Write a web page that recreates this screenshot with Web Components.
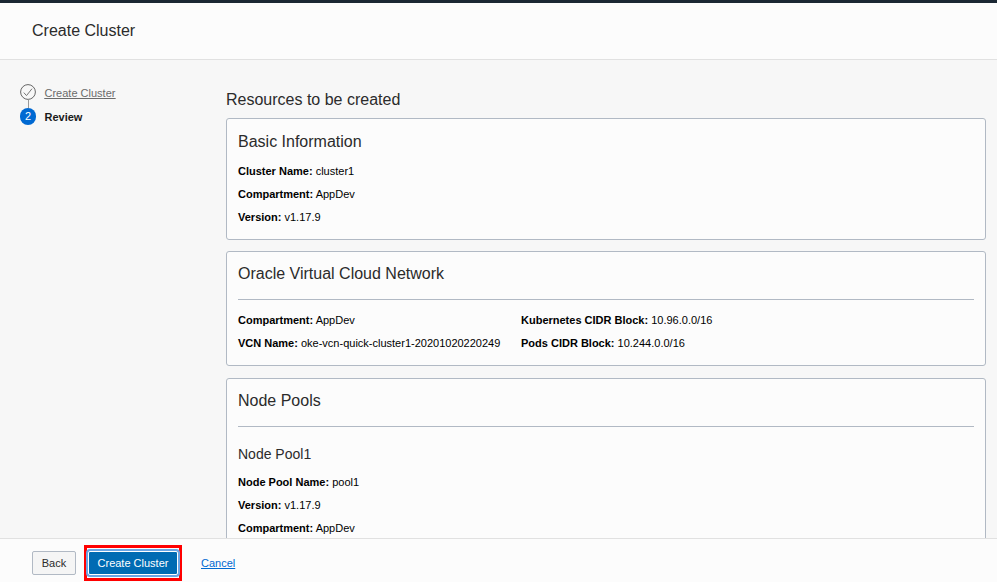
<!DOCTYPE html>
<html lang="en">
<head>
<meta charset="utf-8">
<title>Create Cluster</title>
<style>
html, body { margin: 0; height: 100%; overflow: hidden; }
body { font-family: "Liberation Sans", Arial, sans-serif; font-size: 11px; color: #000; }
</style>
</head>
<body>
<wizard-page>
  <span slot="title">Create Cluster</span>
  <step-list slot="steps">
    <step-item state="done">Create Cluster</step-item>
    <step-item state="current" number="2">Review</step-item>
  </step-list>
  <span slot="heading">Resources to be created</span>
  <info-card heading="Basic Information" style="--ls:.12px">
    <info-row label="Cluster Name:">cluster1</info-row>
    <info-row label="Compartment:">AppDev</info-row>
    <info-row label="Version:">v1.17.9</info-row>
  </info-card>
  <info-card heading="Oracle Virtual Cloud Network" ruled columns>
    <info-row label="Compartment:">AppDev</info-row>
    <info-row label="Kubernetes CIDR Block:">10.96.0.0/16</info-row>
    <info-row label="VCN Name:">oke-vcn-quick-cluster1-20201020220249</info-row>
    <info-row label="Pods CIDR Block:">10.244.0.0/16</info-row>
  </info-card>
  <info-card heading="Node Pools" ruled subheading="Node Pool1">
    <info-row label="Node Pool Name:">pool1</info-row>
    <info-row label="Version:">v1.17.9</info-row>
    <info-row label="Compartment:">AppDev</info-row>
  </info-card>
  <action-button slot="actions">Back</action-button>
  <action-button slot="actions" primary>Create Cluster</action-button>
  <action-button slot="actions" link>Cancel</action-button>
</wizard-page>
<script>
class Base extends HTMLElement {
  constructor() {
    super();
    this.attachShadow({ mode: 'open' }).innerHTML = this.render();
  }
}
customElements.define('wizard-page', class extends Base {
  render() {
    return `<style>
      :host { display: flex; flex-direction: column; height: 100vh; box-sizing: border-box; border-top: 3px solid #1b2733; background: #f7f7f7; }
      header { flex: none; height: 56px; background: #fcfcfc; border-bottom: 1px solid #e1e1e1; padding-left: 32px; font-size: 16px; line-height: 56px; color: #2b2b2b; }
      main { flex: 1; min-height: 0; overflow: hidden; display: grid; grid-template-columns: 206px 760px; padding-left: 20px; }
      nav { padding-top: 24px; }
      h1 { margin: 0; font-size: 16px; font-weight: 400; line-height: 18px; color: #2b2b2b; padding: 31px 0 9px; }
      footer { flex: none; height: 43px; box-sizing: content-box; background: #fcfcfc; border-top: 1px solid #e1e1e1; display: flex; align-items: center; padding-left: 32px; }
      .bar { display: flex; align-items: center; height: 36px; padding-top: 4px; }
    </style>
    <header><slot name="title"></slot></header>
    <main><nav><slot name="steps"></slot></nav><section><h1><slot name="heading"></slot></h1><slot></slot></section></main>
    <footer><div class="bar"><slot name="actions"></slot></div></footer>`;
  }
});
customElements.define('step-list', class extends Base {
  render() { return `<style>:host { display: block; }</style><slot></slot>`; }
});
customElements.define('step-item', class extends Base {
  render() {
    const done = this.getAttribute('state') === 'done';
    const icon = done
      ? `<svg width="16" height="24" viewBox="0 0 16 24"><circle cx="8" cy="8" r="7.4" fill="none" stroke="#666"/><path d="M3.8 8.6l2.7 3L12 4.7" fill="none" stroke="#777"/><path d="M8.5 15.5V24" stroke="#999"/></svg>`
      : `<b>${this.getAttribute('number')}</b>`;
    return `<style>
      :host { display: flex; height: 24px; line-height: 16px; color: #6b6b6b; text-decoration: underline; }
      :host([state=current]) { color: #1a1a1a; font-weight: 700; text-decoration: none; }
      svg { display: block; }
      i { flex: none; width: 16px; margin-right: 8.5px; font-style: normal; }
      b { display: block; width: 16px; height: 17px; line-height: 17px; border-radius: 8.5px; background: #0069d2; color: #fff; font-weight: 400; text-align: center; }
      .t { padding-top: .5px; text-decoration: inherit; }
    </style><i>${icon}</i><span class="t"><slot></slot></span>`;
  }
});
customElements.define('info-card', class extends Base {
  render() {
    const sub = this.getAttribute('subheading');
    return `<style>
      :host { display: block; box-sizing: border-box; height: 122px; margin-bottom: 11px; padding: 0 11px; border: 1px solid #b1b9c4; border-radius: 3px; background: #fcfcfc; }
      :host([ruled]) { height: 115px; margin-bottom: 12px; }
      :host([subheading]) { height: 240px; }
      h2, h3 { margin: 0; font-weight: 400; color: #2b2b2b; }
      h2 { font-size: 16px; line-height: 20px; padding: 13px 0 8px; }
      :host([ruled]) h2 { padding: 12px 0 15px; border-bottom: 1px solid #b1b9c4; margin-bottom: 9px; }
      h3 { font-size: 14px; line-height: 20px; padding: 8px 0 7px; }
      :host([columns]) .rows { display: grid; grid-template-columns: 283px 1fr; }
    </style><h2>${this.getAttribute('heading')}</h2>${sub ? `<h3>${sub}</h3>` : ''}<div class="rows"><slot></slot></div>`;
  }
});
customElements.define('info-row', class extends Base {
  render() {
    return `<style>
      :host { display: block; height: 23px; line-height: 23px; white-space: nowrap; }
    </style><b>${this.getAttribute('label')}</b> <slot></slot>`;
  }
});
customElements.define('action-button', class extends Base {
  render() {
    return `<style>
      :host { display: block; }
      button { box-sizing: border-box; display: block; width: 44px; height: 24px; margin: 0; padding: 0; border: 1px solid #b1b9c4; border-radius: 2px; background: #f5f5f5; color: #2b2b2b; font: inherit; white-space: nowrap; }
      :host([primary]) { box-sizing: border-box; width: 98px; height: 36px; margin: 0 19px 0 8px; border: 3px solid #f00; background: #fcfcfc; }
      :host([primary]) button { width: 90px; height: 24px; margin: 3px 1px; background: #006bb3; color: #fff; border-color: #fff; box-shadow: 0 0 0 2px #6aa5e4; }
      :host([link]) button { width: auto; border: 0; background: none; color: #0069d2; text-decoration: underline; }
    </style><button><slot></slot></button>`;
  }
});
</script>
</body>
</html>
